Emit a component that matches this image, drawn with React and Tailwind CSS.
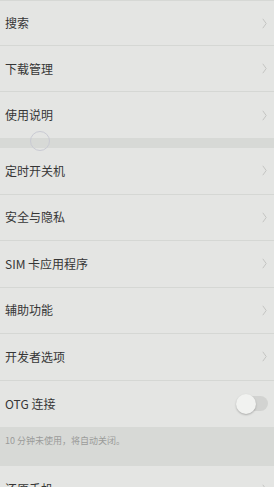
import React from 'react';

const font = { fontFamily: '"Noto Sans CJK SC", "Liberation Sans", sans-serif' };

const Chevron = () => (
  <svg width="5" height="11" viewBox="0 0 5 11" className="shrink-0">
    <path d="M0.8 0.8 L4.2 5.5 L0.8 10.2" fill="none" stroke="#c4c5c3" strokeWidth="1" />
  </svg>
);

const Row = ({ label, last, height = 'h-[46px]', children }) => (
  <div className={`flex items-center justify-between pl-[5px] pr-[7px] ${height} ${last ? '' : 'border-b border-[#d5d7d4]'}`}>
    <span className="text-[12px] text-[#363636] leading-none">{label}</span>
    {children ?? <Chevron />}
  </div>
);

const Toggle = () => (
  <div className="relative w-[32px] h-[22px] flex items-center -mr-[1px]">
    <div className="absolute left-[2px] right-0 h-[15px] rounded-full bg-[#d2d3d1]" />
    <div className="absolute left-0 w-[20px] h-[20px] rounded-full bg-[#f1f2f0] shadow-[0_1px_2px_rgba(0,0,0,0.25)]" />
  </div>
);

export default function App() {
  return (
    <div className="relative w-[274px] h-[487px] overflow-hidden bg-[#e4e5e3]" style={font}>
      <div className="border-t border-[#d6d8d5]" />
      <Row label="搜索" height="h-[45px]" />
      <Row label="下载管理" />
      <Row label="使用说明" last />
      <div className="h-[10px] bg-[#d7d9d6]" />
      <Row label="定时开关机" height="h-[46.5px]" />
      <Row label="安全与隐私" height="h-[46.5px]" />
      <Row label="SIM 卡应用程序" height="h-[46.5px]" />
      <Row label="辅助功能" height="h-[46.5px]" />
      <Row label="开发者选项" height="h-[46.5px]" />
      <Row label="OTG 连接" height="h-[46.5px]" last>
        <Toggle />
      </Row>
      <div className="h-[39px] bg-[#d7d9d6] pl-[5px] pt-[9px]">
        <div className="text-[9px] text-[#9b9c9a] leading-none">10 分钟未使用，将自动关闭。</div>
      </div>
      <Row label="还原手机" last />

      {/* touch indicator */}
      <div className="absolute left-[30px] top-[131px] w-[20px] h-[20px] rounded-full border border-[#c9cad3]" />
    </div>
  );
}
